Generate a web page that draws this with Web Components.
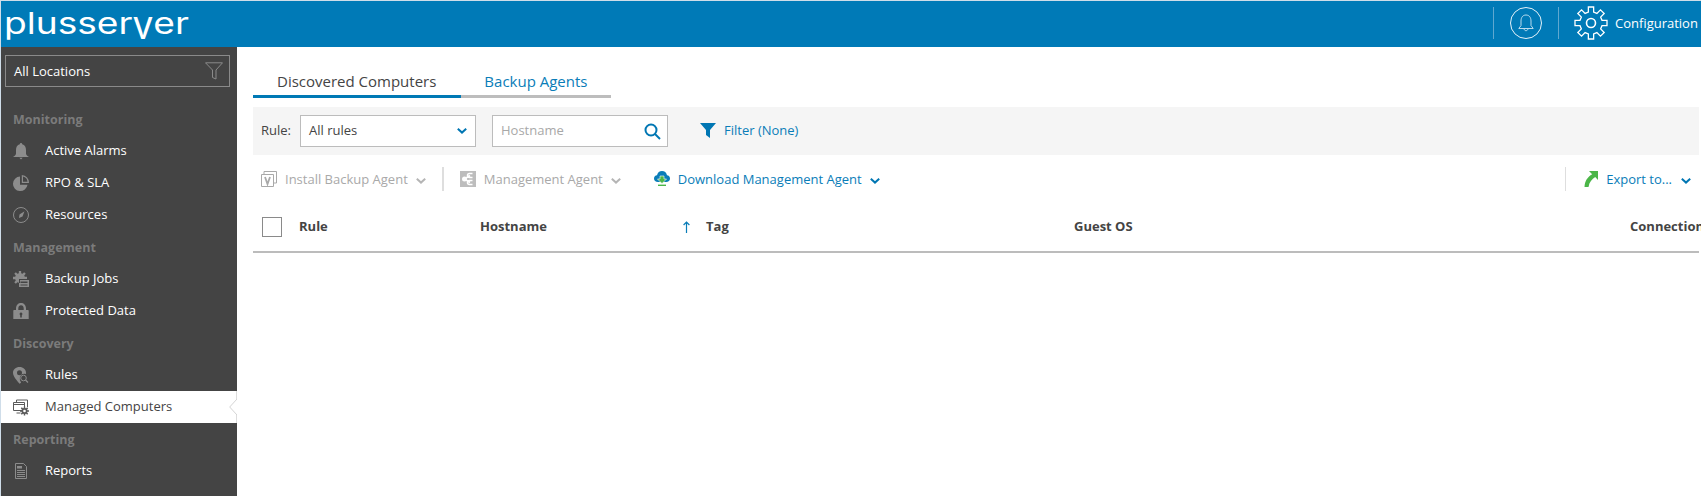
<!DOCTYPE html>
<html>
<head>
<meta charset="utf-8">
<title>plusserver</title>
<style>
html, body { margin: 0; height: 100%; background: #fff; }
body { font-family: "Open Sans", sans-serif; font-size: 13px; color: #444; overflow: hidden; }
</style>
</head>
<body>
<app-shell>
    <app-header></app-header>
    <side-nav slot="side"></side-nav>
    <computers-view slot="main"></computers-view>
</app-shell>

<script>
const CHEVRON = color => `<svg width="10" height="6" viewBox="0 0 10 6"><path d="M.8 .8L5 4.600 9.200 .8" fill="none" stroke="${color}" stroke-width="2"/></svg>`

// 8 blocky teeth round a centre
function gearPath(cx, cy, outer, inner) {
    let d = ''
    for (let i = 0; i < 8; i++) {
        const a = i * Math.PI / 4
        const pts = [[-.15, inner], [-.15, outer], [.15, outer], [.15, inner]].map(([off, r]) => {
            const w = off * outer * 1.1
            return [cx + Math.sin(a) * r + Math.cos(a) * w, cy - Math.cos(a) * r + Math.sin(a) * w]
        })
        d += (i ? 'L' : 'M') + pts.map(p => p[0].toFixed(2) + ' ' + p[1].toFixed(2)).join('L')
    }
    return d + 'z'
}

const NAV_ICONS = {
    bell: `<path d="M8 0c-.8 0-1.200.6-1.200 1.300C4.200 2 3 4 3 7v3.500c0 1.500-1.500 2.500-3 3.500h16c-1.500-1-3-2-3-3.500V7c0-3-1.200-5-3.800-5.700C9.200.6 8.800 0 8 0zM6.300 14.800h3.400L8 16.500z"/>`,
    pie: `<path d="M7 1.500a7.300 7.300 0 1 0 7.500 8.300H7z"/><path d="M8.800 0v8h7.200A7.600 7.600 0 0 0 8.800 0zm1.200 1.500a6 6 0 0 1 4.500 5.300H10z" fill-rule="evenodd"/>`,
    dial: `<circle cx="8" cy="8" r="7.500" fill="none" stroke="currentColor" stroke-width="1"/><path d="M11.500 4.300L9.500 9.500 6 11l.5-3.500z"/>`,
    jobs: `<path d="${gearPath(7, 7, 7, 4.800)}"/><path d="M6 8h10v8H5v-1h-1v-3h2z" fill="#444"/><path d="M7 9h9v7H6v-4h1zM7.500 10.500v1.500h7v-1.500zM7.500 13.500v1h7v-1z" fill-rule="evenodd"/>`,
    lock: `<path d="M3 7.500V5.500C3 2 5.300 0 8 0s5 2 5 5.500v2h-2.300V5.500C10.700 3.300 9.500 2.200 8 2.200S5.300 3.300 5.300 5.500v2z"/><path d="M1 7h14c.4 0 .7.300.7.700V16H.3V7.700C.3 7.300.6 7 1 7zm7 2.500a1.500 1.500 0 0 0-.8 2.700V14.500h1.600v-2.300A1.500 1.500 0 0 0 8 9.500z" fill-rule="evenodd"/>`,
    pin: `<path d="M6.500 0C10.200 0 13 2.500 13 5.800c0 .4 0 .8-.1 1.100a4.800 4.800 0 0 0-6 6l1.200 2.900-1.600 1C4 13.500 0 9.500 0 5.800 0 2.500 2.800 0 6.500 0zm0 3.300a2.500 2.500 0 1 0 0 5 2.500 2.500 0 0 0 0-5z" fill-rule="evenodd"/><circle cx="10.500" cy="11" r="2.800" fill="none" stroke="currentColor" stroke-width="1"/><path d="M12.500 13l2.500 2.500" stroke="currentColor" stroke-width="1.200" fill="none"/>`,
    computers: `<path d="M3.500 3V1h11v7M.5 3.500h11v8H.5zM.5 5.500h11M3.500 14h4" fill="none" stroke="currentColor"/><path d="${gearPath(11.500, 12, 4.500, 3)}"/><circle cx="11.500" cy="12" r="1.300" fill="#fff"/>`,
    report: `<path d="M2.500 .5h8l3 3v12h-11z" fill="none" stroke="currentColor"/><path d="M4 3h5v2.500H4zM4 7h8v1H4zm0 2h8v1H4zm0 2h8v1H4zm0 2h8v1H4z"/>`
}

customElements.define('app-shell', class extends HTMLElement {
    constructor() {
        super()
        this.attachShadow({ mode: "open" }).innerHTML = /*html*/`
        <style>
            :host { display: grid; grid-template: 46px 1fr / 236px 1fr; height: 496px; box-sizing: border-box; padding: 1px 0 0 1px; background: #cfdde9; }
            ::slotted(app-header) { grid-column: 1 / -1; }
        </style>
        <slot></slot>
        <slot name="side"></slot>
        <slot name="main"></slot>`
    }
})

customElements.define('app-header', class extends HTMLElement {
    constructor() {
        super()
        this.attachShadow({ mode: "open" }).innerHTML = /*html*/`
        <style>
            :host { display: flex; align-items: center; background: #007ab7; color: #fff; padding-bottom: 2px; box-sizing: border-box; }
            .logo { flex: 1; padding-left: 3px; font: 400 30px/40px Inter, sans-serif; white-space: nowrap; }
            .logo span { display: inline-block; transform-origin: 0 50%; transform: scaleX(1.237); }
            .logo b { display: inline-block; font-weight: 400; line-height: 40px; transform: scaleY(1.35); transform-origin: 50% 40%; }
            .sep { width: 1px; height: 32px; background: #5fa8d0; }
            .bell { width: 32px; height: 32px; margin: 0 16px; display: block; }
            .gear { width: 34px; height: 34px; margin: 0 7px 0 15px; display: block; }
            .label { width: 86px; white-space: nowrap; }
        </style>
        <div class="logo"><span>plusser<b>v</b>er</span></div>
        <div class="sep"></div>
        <svg class="bell" viewBox="0 0 32 32" fill="none" stroke="#b9dcee" stroke-width="1"><circle cx="16" cy="16" r="15.500" stroke="#e4f2f9"/><path d="M16 8c-3.500 0-5 2.800-5 6v4.500L8.800 21.500h14.400L21 18.500V14c0-3.200-1.500-6-5-6z"/><path d="M14 21.500c0 1.300.9 2.200 2 2.200s2-.9 2-2.200"/></svg>
        <div class="sep"></div>
        <svg class="gear" viewBox="0 0 34 34" fill="none" stroke="#fff" stroke-width="1.300"><path d="${gearPath(17, 17, 16, 11)}"/><circle cx="17" cy="17" r="4.500" stroke-width="1.600"/></svg>
        <div class="label">Configuration</div>`
    }
})

customElements.define('nav-item', class extends HTMLElement {
    constructor() {
        super()
        const icon = NAV_ICONS[this.getAttribute('icon')]
        this.attachShadow({ mode: "open" }).innerHTML = /*html*/`
        <style>
            :host { display: flex; align-items: center; height: 30px; padding: 0 0 2px 12px; color: #fff; position: relative; }
            :host([active]) { background: #fff; color: #444; border-right: 1px solid #ddd; }
            :host([active]) .icon { color: #5a5a5a; }
            .icon { width: 16px; height: 17px; margin: 2px 16px 0 0; fill: currentColor; color: #8c8c8c; flex: none; overflow: visible; }
            .tip { display: none; position: absolute; right: -1px; top: 8px; }
            :host([active]) .tip { display: block; }
        </style>
        <svg class="icon" viewBox="0 0 16 17">${icon}</svg><slot></slot>
        <svg class="tip" width="8" height="16" viewBox="0 0 8 16"><path d="M8 0v16L.5 8z" fill="#fff"/><path d="M8 0L.7 8 8 16" fill="none" stroke="#d4d4d4"/></svg>`
    }
})

customElements.define('nav-section', class extends HTMLElement {
    constructor() {
        super()
        this.attachShadow({ mode: "open" }).innerHTML = /*html*/`
        <style>
            :host { display: flex; align-items: center; height: 32px; padding-left: 12px; color: #7b7b7b; font-weight: 700; font-size: 12.5px; }
        </style>
        <slot></slot>`
    }
})

customElements.define('side-nav', class extends HTMLElement {
    constructor() {
        super()
        this.attachShadow({ mode: "open" }).innerHTML = /*html*/`
        <style>
            :host { display: block; background: #444; color: #fff; overflow: hidden; }
            .loc { margin: 8px 7px 16px 4px; height: 32px; box-sizing: border-box; border: 1px solid #8a8a8a; display: flex; align-items: center; justify-content: space-between; padding: 0 6px 0 8px; }
        </style>
        <div class="loc"><span>All Locations</span>
            <svg width="18" height="18" viewBox="0 0 18 18" fill="none" stroke="#8a8a8a"><path d="M.5 .8h17L11 8v9l-3.500-1.500V8z"/></svg>
        </div>
        <nav-section>Monitoring</nav-section>
        <nav-item icon="bell">Active Alarms</nav-item>
        <nav-item icon="pie">RPO &amp; SLA</nav-item>
        <nav-item icon="dial">Resources</nav-item>
        <nav-section>Management</nav-section>
        <nav-item icon="jobs">Backup Jobs</nav-item>
        <nav-item icon="lock">Protected Data</nav-item>
        <nav-section>Discovery</nav-section>
        <nav-item icon="pin">Rules</nav-item>
        <nav-item icon="computers" active>Managed Computers</nav-item>
        <nav-section>Reporting</nav-section>
        <nav-item icon="report">Reports</nav-item>`
    }
})

customElements.define('tool-button', class extends HTMLElement {
    constructor() {
        super()
        this.attachShadow({ mode: "open" }).innerHTML = /*html*/`
        <style>
            :host { display: flex; align-items: center; gap: 8px; color: #0a7db8; white-space: nowrap; }
            :host([disabled]) { color: #a9a9a9; }
            ::slotted(svg) { display: block; flex: none; }
        </style>
        <slot name="icon"></slot><slot></slot><slot name="caret"></slot>`
    }
})

customElements.define('computers-view', class extends HTMLElement {
    constructor() {
        super()
        const blue = CHEVRON('#0076b3'), gray = CHEVRON('#b5b5b5')
        this.attachShadow({ mode: "open" }).innerHTML = /*html*/`
        <style>
            :host { display: block; background: #fff; padding: 0 2px 0 16px; min-width: 0; overflow: hidden; }
            .tabs { display: flex; margin-top: 15px; font-size: 15px; line-height: 38px; height: 36px; }
            .tab { border-bottom: 3px solid #bdbdbd; height: 33px; }
            .tab.on { border-bottom-color: #0079b5; color: #444; padding: 0 25px 0 24px; }
            .tab.off { color: #0a7db8; padding: 0 24px 0 23px; }
            .filters { display: flex; align-items: center; height: 48px; margin-top: 9px; background: #f5f5f5; padding-left: 8px; }
            .filters label { margin-right: 9px; padding-bottom: 2px; }
            .box { width: 176px; height: 32px; box-sizing: border-box; border: 1px solid #bcbcbc; background: #fff; display: flex; align-items: center; justify-content: space-between; padding: 0 8px; }
            .box span { padding-bottom: 2px; }
            .box.search { margin-left: 16px; color: #a8a8a8; padding-right: 6px; }
            .filter { display: flex; align-items: center; gap: 8px; margin-left: 32px; color: #0a7db8; padding-bottom: 2px; }
            .tools { display: flex; align-items: center; height: 47px; padding: 0 0 1px 8px; }
            .vsep { width: 2px; height: 24px; background: #dedede; margin: 0 16px; }
            .tools .end { margin-left: auto; display: flex; align-items: center; }
            .tools .end .vsep { width: 1px; margin: 0 18px 0 0; }
            .head { display: grid; grid-template-columns: 46px 181px 226px 368px 556px 100px; align-items: center; height: 46px; padding-bottom: 2px; border-bottom: 2px solid #bcbcbc; font-weight: 700; white-space: nowrap; }
            .check { width: 20px; height: 20px; box-sizing: border-box; border: 1px solid #8a8a8a; margin: 2px 0 0 9px; }
            .sort { display: flex; justify-content: space-between; align-items: center; padding-right: 16px; }
            .sort svg { display: block; margin-top: 2px; }
        </style>
        <div class="tabs">
            <div class="tab on">Discovered Computers</div>
            <div class="tab off">Backup Agents</div>
        </div>
        <div class="filters">
            <label>Rule:</label>
            <div class="box"><span>All rules</span>${blue}</div>
            <div class="box search"><span>Hostname</span>
                <svg width="17" height="17" viewBox="0 0 17 17" fill="none" stroke="#0076b3" stroke-width="2"><circle cx="7" cy="7" r="5.500"/><path d="M11 11l5 5"/></svg>
            </div>
            <div class="filter">
                <svg width="16" height="16" viewBox="0 0 16 16" fill="#0076b3"><path d="M0 1h16L10 8v8l-4-3V8z"/></svg>
                Filter (None)
            </div>
        </div>
        <div class="tools">
            <tool-button disabled>
                <svg slot="icon" width="16" height="16" viewBox="0 0 16 16" fill="none" stroke="#a9a9a9"><path d="M3 3V.5h12.500V12H13M.5 3.500h12v12H.5z"/><path d="M4 6l2.500 7L9 6" stroke-width="1.800"/></svg>
                Install Backup Agent
                <span slot="caret">${gray}</span>
            </tool-button>
            <div class="vsep"></div>
            <tool-button disabled>
                <svg slot="icon" width="16" height="16" viewBox="0 0 16 16"><path d="M0 0h16v16H0z" fill="#bdbdbd"/><circle cx="4.500" cy="8" r="2.500" fill="#fff"/><path d="M12.500 2.500H9.500a2 2 0 0 0 0 4H12.500M12.500 9.500H9.500a2 2 0 0 0 0 4H12.500M4.500 8L10 4.500M4.500 8L10 11.500" fill="none" stroke="#fff" stroke-width="1.500"/></svg>
                Management Agent
                <span slot="caret">${gray}</span>
            </tool-button>
            <tool-button style="margin-left:33px">
                <svg slot="icon" width="16" height="17" viewBox="0 0 16 17"><path d="M4 12C1.500 12 0 10.500 0 8.500 0 6.800 1.200 5.500 3 5.300 3.500 2.500 5.500 1 8 1s4.500 1.500 5 4.300c1.800.2 3 1.500 3 3.200 0 2-1.500 3.500-4 3.500z" fill="#0a7db8"/><path d="M6 6h4v3h2.500L8 13.500 3.500 9H6z" fill="#4bb648" stroke="#fff" stroke-width=".6"/><path d="M4 15.300h8" stroke="#4bb648" stroke-width="1.400"/></svg>
                Download Management Agent
                <span slot="caret">${blue}</span>
            </tool-button>
            <div class="end">
                <div class="vsep"></div>
                <tool-button>
                    <svg slot="icon" width="14" height="16" viewBox="0 0 14 16"><path d="M5 0h9v9l-2.800-3C8 8 5.300 11 4.500 16H.5C.8 10 3.500 6 8.200 3.300z" fill="#4bb648"/></svg>
                    Export to...
                    <span slot="caret" style="margin-left:1px">${blue}</span>
                </tool-button>
                <div style="width:8px"></div>
            </div>
        </div>
        <div class="head">
            <div class="check"></div>
            <div>Rule</div>
            <div class="sort">
                <span>Hostname</span>
                <svg width="7" height="12" viewBox="0 0 7 12" fill="none" stroke="#0a7db8" stroke-width="1.200"><path d="M3.500 12V1M.6 4l2.900-3 2.900 3"/></svg>
            </div>
            <div>Tag</div>
            <div>Guest OS</div>
            <div>Connection</div>
        </div>`
    }
})
</script>
</body>
</html>
